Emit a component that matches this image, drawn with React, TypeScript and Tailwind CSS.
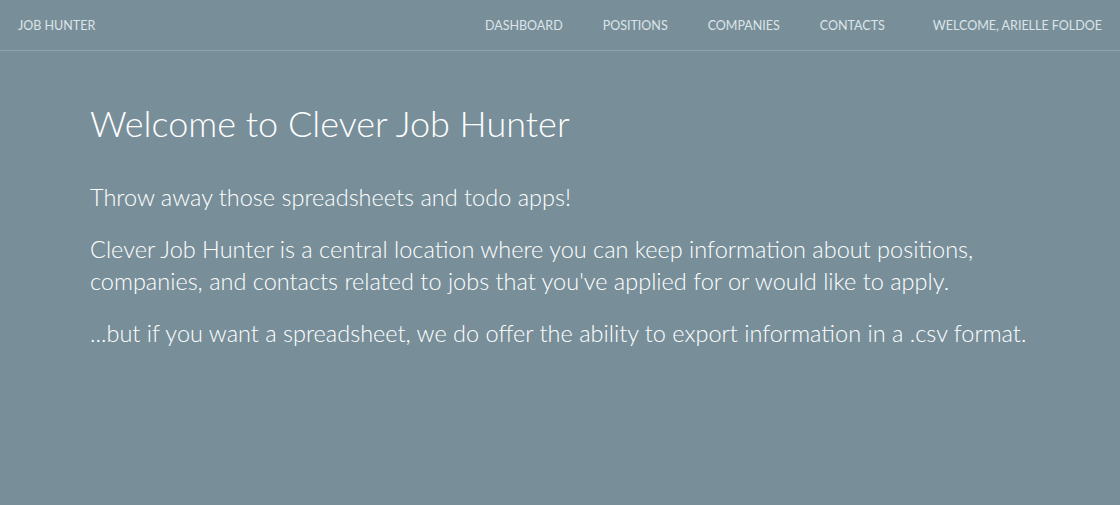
export default function App() {
  const links = ["Dashboard", "Positions", "Companies", "Contacts"];
  return (
    <div className="min-h-[505px] bg-[#788f9a] font-['Lato',sans-serif] text-white">
      <nav className="flex h-[51px] items-center justify-between border-b border-[#8ea2ac] pl-[18px] pr-[18px] pt-[3px] text-[12.5px] uppercase text-[#dde4e8]">
        <span>Job Hunter</span>
        <div className="flex items-center">
          {links.map((l) => (
            <span key={l} className="px-5">
              {l}
            </span>
          ))}
          <span className="ml-7">Welcome, Arielle Foldoe</span>
        </div>
      </nav>
      <main className="mx-auto w-[970px] px-[15px] pt-[48px] font-light">
        <h1 className="text-[36px] leading-[48px]">Welcome to Clever Job Hunter</h1>
        <p className="mt-[34px] text-[23.5px] leading-[32px]">
          Throw away those spreadsheets and todo apps!
        </p>
        <p className="mt-[20px] text-[23.5px] leading-[32px]">
          Clever Job Hunter is a central location where you can keep information about positions,
          companies, and contacts related to jobs that you've applied for or would like to apply.
        </p>
        <p className="mt-[20px] text-[23.5px] leading-[32px]">
          ...but if you want a spreadsheet, we do offer the ability to export information in a .csv
          format.
        </p>
      </main>
    </div>
  );
}
